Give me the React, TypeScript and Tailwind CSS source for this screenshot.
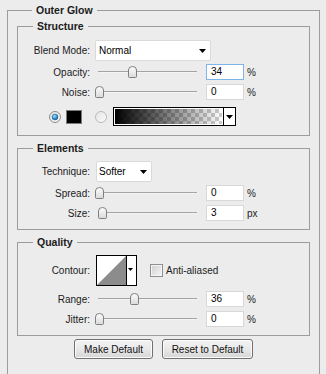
import React from 'react'

function Arrow() {
  return (
    <svg width="7" height="4" viewBox="0 0 7 4" className="shrink-0">
      <polygon points="0,0 7,0 3.5,4" fill="#000" />
    </svg>
  )
}

function Thumb() {
  return (
    <svg width="9" height="12" viewBox="0 0 9 12">
      <defs>
        <linearGradient id="thumbFill" x1="0" y1="0" x2="0" y2="1">
          <stop offset="0" stopColor="#fdfdfd" />
          <stop offset="1" stopColor="#d9d9d9" />
        </linearGradient>
      </defs>
      <path
        d="M1.5 11.5 Q0.5 11.5 0.5 10.5 V4 Q0.5 0.5 4.5 0.5 Q8.5 0.5 8.5 4 V10.5 Q8.5 11.5 7.5 11.5 Z"
        fill="url(#thumbFill)"
        stroke="#7f7f7f"
      />
    </svg>
  )
}

function Slider({ pos }: { pos: number }) {
  return (
    <div className="relative w-[106px] h-[16px] shrink-0">
      <div className="absolute left-[3px] right-[4px] top-[7px] h-[2px] border-t border-[#a3a3a3] bg-[#f4f4f4]" />
      <div className="absolute top-[2px] flex" style={{ left: pos }}>
        <Thumb />
      </div>
    </div>
  )
}

function NumBox({ value, focused }: { value: string; focused?: boolean }) {
  return (
    <div
      className={`ml-[5px] w-[38px] h-[16px] shrink-0 bg-white border pl-[4px] leading-[14px] text-black ${
        focused ? 'border-[#7eb4ea]' : 'border-[#d8d8d8]'
      }`}
    >
      {value}
    </div>
  )
}

function Row({ label, className, children }: { label: string; className: string; children: React.ReactNode }) {
  return (
    <div className={`flex items-center ${className}`}>
      <div className="w-[72px] shrink-0 text-right">{label}</div>
      <div className="ml-[5px] flex items-center">{children}</div>
    </div>
  )
}

function SliderRow({ label, pos, value, unit, focused, className }: {
  label: string
  pos: number
  value: string
  unit: string
  focused?: boolean
  className: string
}) {
  return (
    <Row label={label} className={`h-[16px] ${className}`}>
      <Slider pos={pos} />
      <NumBox value={value} focused={focused} />
      <span className="ml-[3px]">{unit}</span>
    </Row>
  )
}

function Legend({ children }: { children: React.ReactNode }) {
  return <legend className="ml-[15px] px-[4px] text-[10.5px] font-bold leading-[13px]">{children}</legend>
}

function Radio({ checked }: { checked?: boolean }) {
  return (
    <svg width="12" height="12" viewBox="0 0 12 12" className="shrink-0">
      <defs>
        <linearGradient id="radioRing" x1="0" y1="0" x2="1" y2="1">
          <stop offset="0" stopColor="#e4e4e4" />
          <stop offset="1" stopColor="#fbfbfb" />
        </linearGradient>
        <radialGradient id="radioDot" cx="40%" cy="35%" r="65%">
          <stop offset="0" stopColor="#9be2ff" />
          <stop offset="1" stopColor="#0b5da6" />
        </radialGradient>
      </defs>
      <circle cx="6" cy="6" r="5.5" fill="url(#radioRing)" stroke={checked ? '#8a8a8a' : '#b8b8b8'} />
      {checked && <circle cx="6" cy="6" r="3" fill="url(#radioDot)" stroke="#1c5b8f" strokeWidth="0.5" />}
    </svg>
  )
}

function Contour() {
  return (
    <svg width="41" height="31" viewBox="0 0 41 31" className="shrink-0">
      <rect x="0.5" y="0.5" width="40" height="30" fill="#fff" stroke="#000" />
      <polygon points="1,30 30,1 30,30" fill="#8c8c8c" />
      <line x1="30.5" y1="0" x2="30.5" y2="31" stroke="#000" />
      <polygon points="32,13 37,13 34.5,16" fill="#000" />
    </svg>
  )
}

export default function App() {
  return (
    <div className="h-[374px] overflow-hidden bg-[#ececec] pt-[4px] pl-[7px] font-['Liberation_Sans',Arial,sans-serif] text-[10px] text-[#1b1b1b]">
      <fieldset className="w-[313px] h-[420px] border border-[#9c9c9c] px-[9px]">
        <Legend>Outer Glow</Legend>

        {/* Structure */}
        <fieldset className="mt-[3px] border border-[#9c9c9c] pb-[9px]">
          <Legend>Structure</Legend>
          <Row label="Blend Mode:" className="mt-[7px] h-[21px]">
            <div className="flex items-center w-[116px] h-[21px] bg-white border border-[#dadada] rounded-[2px] pl-[3px] pr-[4px] text-black">
              <span className="flex-1">Normal</span>
              <Arrow />
            </div>
          </Row>
          <SliderRow label="Opacity:" pos={33} value="34" unit="%" focused className="mt-[3px]" />
          <SliderRow label="Noise:" pos={0} value="0" unit="%" className="mt-[4px]" />
          <div className="mt-[7px] h-[19px] flex items-center">
            <div className="ml-[31px]">
              <Radio checked />
            </div>
            <div className="ml-[5px] w-[16px] h-[14px] bg-black border border-[#7a7a7a]" />
            <div className="ml-[13px]">
              <Radio />
            </div>
            <div className="ml-[6px] flex h-[19px]">
              <div className="w-[111px] h-full border border-black p-[1px] bg-white">
                <div className="h-full bg-[image:repeating-conic-gradient(#cccccc_0_25%,#ffffff_0_50%)] bg-[length:8px_8px]">
                  <div className="h-full bg-linear-to-r from-black to-transparent" />
                </div>
              </div>
              <div className="w-[12px] h-full border-y border-r border-black bg-white flex items-center justify-center">
                <Arrow />
              </div>
            </div>
          </div>
        </fieldset>

        {/* Elements */}
        <fieldset className="mt-[6px] border border-[#9c9c9c] pb-[8px]">
          <Legend>Elements</Legend>
          <Row label="Technique:" className="mt-[6px] h-[21px]">
            <div className="ml-[1px] flex items-center w-[56px] h-[21px] bg-white border border-[#dadada] rounded-[2px] pl-[2px] pr-[4px] text-black">
              <span className="flex-1">Softer</span>
              <Arrow />
            </div>
          </Row>
          <SliderRow label="Spread:" pos={0} value="0" unit="%" className="mt-[3px]" />
          <SliderRow label="Size:" pos={3} value="3" unit="px" className="mt-[4px]" />
        </fieldset>

        {/* Quality */}
        <fieldset className="mt-[6px] border border-[#9c9c9c] pb-[8px]">
          <Legend>Quality</Legend>
          <Row label="Contour:" className="mt-[6px] h-[31px]">
            <div className="ml-[1px] flex">
              <Contour />
            </div>
            <div className="ml-[13px] w-[13px] h-[13px] border border-[#8e8f8f] bg-linear-to-br from-[#cfcfcf] to-[#f7f7f7] shadow-[inset_0_0_0_1px_#f4f4f4]" />
            <span className="ml-[3px]">Anti-aliased</span>
          </Row>
          <SliderRow label="Range:" pos={35} value="36" unit="%" className="mt-[5px]" />
          <SliderRow label="Jitter:" pos={0} value="0" unit="%" className="mt-[4px]" />
        </fieldset>

        <div className="mt-[3px] flex justify-center gap-[9px]">
          <button className="w-[79px] h-[20px] rounded-[3px] border border-[#707070] bg-linear-to-b from-[#f3f3f3] via-[#e9e9e9] to-[#d5d5d5] shadow-[inset_0_0_0_1px_#fbfbfb] text-[#111]">
            Make Default
          </button>
          <button className="w-[91px] h-[20px] rounded-[3px] border border-[#707070] bg-linear-to-b from-[#f3f3f3] via-[#e9e9e9] to-[#d5d5d5] shadow-[inset_0_0_0_1px_#fbfbfb] text-[#111]">
            Reset to Default
          </button>
        </div>
      </fieldset>
    </div>
  )
}
